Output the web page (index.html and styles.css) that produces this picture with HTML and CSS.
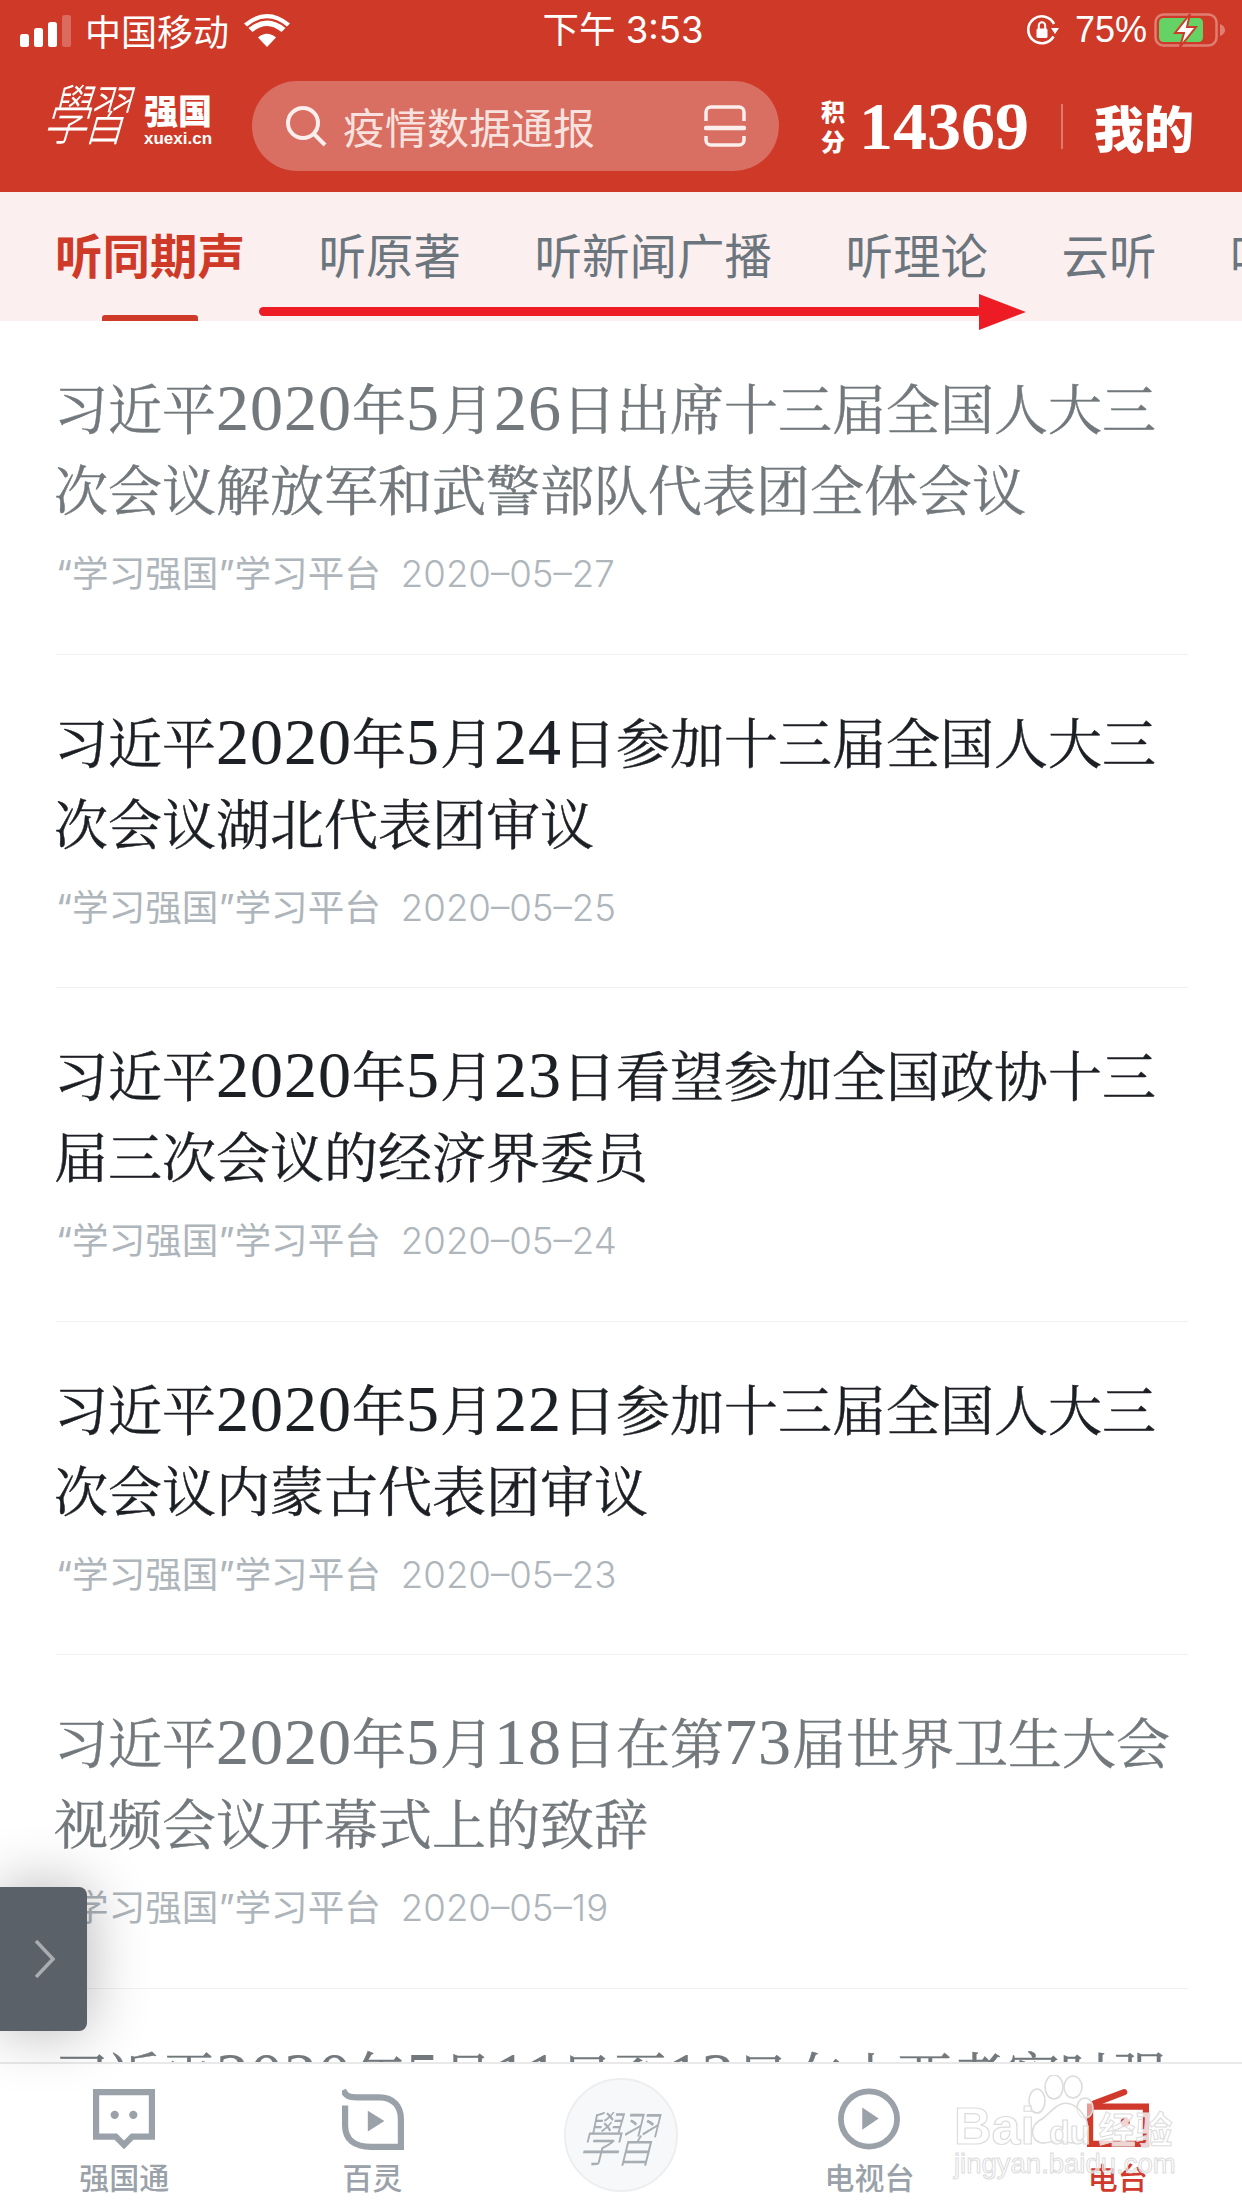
FILE: index.html
```html
<!DOCTYPE html>
<html lang="zh-CN">
<head>
<meta charset="utf-8">
<title>学习强国</title>
<link rel="stylesheet" href="styles.css">
</head>
<body>
<div class="phone">
  <header class="masthead">
    <div class="status">
      <div class="status-left">
        <svg class="signal" viewBox="0 0 51 32"><rect x="0" y="19" width="9" height="13" rx="2.5" fill="#fff"/><rect x="14" y="13" width="9" height="19" rx="2.5" fill="#fff"/><rect x="28" y="7" width="9" height="25" rx="2.5" fill="#fff"/><rect x="42" y="0" width="9" height="32" rx="2.5" fill="#fff" opacity=".25"/></svg>
        <span class="carrier">中国移动</span>
        <svg class="wifi" viewBox="0 0 46 33"><path d="M23 33 L14 23.5 Q23 16 32 23.5 Z" fill="#fff"/><path d="M8.5 18 L4.5 14 Q23 -1 41.500 14 L37.500 18 Q23 6 8.500 18 Z" fill="#fff"/><path d="M0 9.500 Q23 -9.500 46 9.500 L43 12.500 Q23 -4 3 12.500 Z" fill="#fff"/></svg>
      </div>
      <div class="status-time">下午 3:53</div>
      <div class="status-right">
        <svg class="rotlock" viewBox="0 0 33 33"><path d="M27.500 22.500 A13.500 13.500 0 1 1 28 10" fill="none" stroke="#fff" stroke-width="2.600"/><path d="M33 14 L25 14 L29 20 Z" fill="#fff"/><rect x="10.500" y="14.500" width="11" height="9.500" rx="1.500" fill="#fff"/><path d="M12.800 15 V11.500 a3.200 3.200 0 0 1 6.400 0 V15" fill="none" stroke="#fff" stroke-width="2"/></svg>
        <span class="pct">75%</span>
        <svg class="battery" viewBox="0 0 72 34"><rect x="1.500" y="1.500" width="61" height="31" rx="8" fill="none" stroke="#fff" stroke-opacity=".35" stroke-width="2.500"/><rect x="5" y="5" width="44" height="24" rx="4.500" fill="#64d264"/><path d="M66 11 Q71 13 71 17 Q71 21 66 23 Z" fill="#fff" fill-opacity=".35"/><path d="M36 1 L21 20 L30 20 L26 34 L42 14 L33 14 Z" fill="#fff" stroke="#cf3a28" stroke-width="2"/></svg>
      </div>
    </div>
    <div class="topbar">
      <div class="logo">
        <span class="logo-brush">學習</span>
        <span class="logo-side"><b class="logo-cn">强国</b><b class="logo-en">xuexi.cn</b></span>
      </div>
      <div class="search">
        <svg class="search-icon" viewBox="0 0 42 42"><circle cx="18" cy="18" r="15" fill="none" stroke="#fbeeec" stroke-width="4"/><path d="M29 29 L40 40" stroke="#fbeeec" stroke-width="4"/></svg>
        <span class="search-text">疫情数据通报</span>
        <svg class="scan-icon" viewBox="0 0 42 42"><path d="M2 16 V7 a5 5 0 0 1 5 -5 H35 a5 5 0 0 1 5 5 V16 M2 31 V35 a5 5 0 0 0 5 5 H35 a5 5 0 0 0 5 -5 V31" fill="none" stroke="#fbeeec" stroke-width="3.500"/><path d="M2 23 H40" stroke="#fbeeec" stroke-width="4.500" stroke-linecap="round"/></svg>
      </div>
      <div class="score">
        <span class="score-label">积<br>分</span>
        <span class="score-num">14369</span>
        <span class="score-div"></span>
        <span class="mine">我的</span>
      </div>
    </div>
  </header>

  <nav class="tabs">
    <span class="tab active">听同期声</span>
    <span class="tab">听原著</span>
    <span class="tab">听新闻广播</span>
    <span class="tab">听理论</span>
    <span class="tab">云听</span>
    <span class="tab">听书</span>
    <svg class="swipe-arrow" viewBox="0 0 767 36"><rect x="0" y="13" width="722" height="9" rx="4.500" fill="#ed1c24"/><path d="M720 0 L767 18 L720 36 Z" fill="#ed1c24"/></svg>
  </nav>

  <main class="list">
    <article class="item read">
      <h2 class="title">习近平<span class="num">2020</span>年<span class="num">5</span>月<span class="num">26</span>日出席十三届全国人大三次会议解放军和武警部队代表团全体会议</h2>
      <p class="meta">“学习强国”学习平台<span class="date">2020–05–27</span></p>
    </article>
    <article class="item">
      <h2 class="title">习近平<span class="num">2020</span>年<span class="num">5</span>月<span class="num">24</span>日参加十三届全国人大三次会议湖北代表团审议</h2>
      <p class="meta">“学习强国”学习平台<span class="date">2020–05–25</span></p>
    </article>
    <article class="item">
      <h2 class="title">习近平<span class="num">2020</span>年<span class="num">5</span>月<span class="num">23</span>日看望参加全国政协十三届三次会议的经济界委员</h2>
      <p class="meta">“学习强国”学习平台<span class="date">2020–05–24</span></p>
    </article>
    <article class="item">
      <h2 class="title">习近平<span class="num">2020</span>年<span class="num">5</span>月<span class="num">22</span>日参加十三届全国人大三次会议内蒙古代表团审议</h2>
      <p class="meta">“学习强国”学习平台<span class="date">2020–05–23</span></p>
    </article>
    <article class="item read">
      <h2 class="title">习近平<span class="num">2020</span>年<span class="num">5</span>月<span class="num">18</span>日在第<span class="num">73</span>届世界卫生大会视频会议开幕式上的致辞</h2>
      <p class="meta">“学习强国”学习平台<span class="date">2020–05–19</span></p>
    </article>
    <article class="item read">
      <h2 class="title">习近平<span class="num">2020</span>年<span class="num">5</span>月<span class="num">11</span>日至<span class="num">12</span>日在山西考察时强调</h2>
    </article>
  </main>

  <div class="side-handle">
    <svg class="chevron" viewBox="0 0 20 38"><path d="M1 1 L18 19 L1 37" fill="none" stroke="#a9adb1" stroke-width="3.500"/></svg>
  </div>

  <footer class="tabbar">
    <div class="bar-item">
      <svg class="bar-icon" viewBox="0 0 60 60"><path d="M3 4 H57 V47 H38 L30 55 L22 47 H3 Z" fill="none" stroke="#9aa1a9" stroke-width="6"/><circle cx="21" cy="26" r="4" fill="#9aa1a9"/><circle cx="39" cy="26" r="4" fill="#9aa1a9"/></svg>
      <span class="bar-label">强国通</span>
    </div>
    <div class="bar-item">
      <svg class="bar-icon" viewBox="0 0 60 60"><path d="M1 2 C4 8 7 9 14 9 H36 C50 9 57 18 57 30 V57 H28 C12 57 3 50 3 36 V17" fill="none" stroke="#9aa1a9" stroke-width="6"/><path d="M25 22 L41 32 L25 42 Z" fill="#9aa1a9"/></svg>
      <span class="bar-label">百灵</span>
    </div>
    <div class="bar-item center">
      <div class="center-badge"><span class="badge-brush">學習</span></div>
    </div>
    <div class="bar-item">
      <svg class="bar-icon" viewBox="0 0 64 64"><ellipse cx="32" cy="32" rx="29" ry="28.500" fill="none" stroke="#9aa1a9" stroke-width="6"/><path d="M25 20 L42 31.500 L25 43 Z" fill="#9aa1a9"/></svg>
      <span class="bar-label">电视台</span>
    </div>
    <div class="bar-item on">
      <svg class="bar-icon" viewBox="0 0 60 60"><path d="M7 15 L36 4" stroke="#d0392b" stroke-width="6" stroke-linecap="round"/><path d="M3 18 H57 V54 H3 Z" fill="none" stroke="#d0392b" stroke-width="6"/><circle cx="37" cy="33" r="4.500" fill="#d0392b"/></svg>
      <span class="bar-label">电台</span>
    </div>
    <div class="watermark">
      <svg class="paw" viewBox="0 0 70 74"><g fill="rgba(255,255,255,.5)" stroke="#dcdcdc" stroke-width="1.600"><ellipse cx="9" cy="26" rx="8" ry="12"/><ellipse cx="26" cy="12" rx="9" ry="12"/><ellipse cx="45" cy="12" rx="9" ry="11"/><ellipse cx="57" cy="33" rx="8" ry="10"/><path d="M28 32 C38 24 48 30 54 38 C64 48 60 68 44 68 C36 66 24 66 16 68 C2 68 0 50 14 44 C20 40 22 36 28 32 Z"/></g></svg>
      <div class="wm-main"><span>Bai</span><span class="wm-du">du</span><span class="wm-cn">经验</span></div>
      <div class="wm-sub">jingyan.baidu.com</div>
    </div>
  </footer>
</div>
</body>
</html>
```
FILE: styles.css
```css
* { box-sizing: border-box; }
html, body { margin: 0; padding: 0; background: #fff; }
body { font-family: "Noto Sans CJK SC", "Liberation Sans", sans-serif; }
.phone { position: relative; width: 1242px; height: 2208px; overflow: hidden; display: flex; flex-direction: column; background: #fff; }

.masthead { height: 192px; flex: none; background: #cf3a28; color: #fff; }
.status { height: 62px; padding: 13px 16px 0 20px; display: grid; grid-template-columns: 1fr auto 1fr; align-items: start; }
.status-left { display: flex; align-items: center; height: 34px; }
.signal { width: 51px; height: 32px; margin-top: 1px; }
.carrier { font-size: 36px; line-height: 34px; margin-left: 14px; }
.wifi { width: 46px; height: 33px; margin-left: 15px; }
.status-time { font-size: 36.500px; line-height: 34px; font-family: Inter, "Noto Sans CJK SC", sans-serif; }
.status-right { display: flex; align-items: center; justify-content: flex-end; height: 34px; }
.rotlock { width: 33px; height: 33px; }
.pct { font-family: "Liberation Sans", sans-serif; font-size: 36px; line-height: 34px; margin-left: 16px; }
.battery { width: 72px; height: 34px; margin-left: 7px; }

.topbar { height: 130px; padding: 7px 0 0 48px; display: flex; align-items: flex-start; }
.logo { width: 162px; height: 80px; display: flex; align-items: flex-end; }
.logo-brush { font-family: "Noto Sans CJK TC", sans-serif; font-size: 44px; line-height: 70px; letter-spacing: -5px; width: 94px; flex: none; transform: skewX(-16deg) scaleY(1.5); transform-origin: 50% 60%; font-weight: 300; }
.logo-side { display: flex; flex-direction: column; align-items: flex-start; margin-left: 2px; }
.logo-cn { font-size: 34px; line-height: 38px; font-weight: 900; white-space: nowrap; letter-spacing: 0; }
.logo-en { font-family: "Liberation Sans", sans-serif; font-size: 17px; line-height: 20px; font-weight: 700; }
.search { width: 527px; height: 90px; margin: 12px 0 0 42px; border-radius: 45px; background: #d96e62; display: flex; align-items: center; padding: 0 33px; flex: none; }
.search-icon { width: 42px; height: 42px; flex: none; }
.search-text { font-size: 42px; line-height: 48px; color: #f8e2df; margin-left: 16px; flex: 1; white-space: nowrap; }
.scan-icon { width: 42px; height: 42px; flex: none; }
.score { display: flex; align-items: center; height: 90px; margin: 12px 0 0 42px; flex: none; }
.score-label { font-family: "Noto Sans CJK SC", serif; font-weight: 900; font-size: 24px; line-height: 30px; width: 27px; }
.score-num { font-family: "Liberation Serif", serif; font-weight: 700; font-size: 68px; line-height: 70px; margin-left: 11px; }
.score-div { width: 2px; height: 45px; background: #e07a6d; margin-left: 32px; }
.mine { font-family: "Noto Sans CJK SC", serif; font-weight: 900; font-size: 50px; line-height: 60px; margin-left: 31px; }

.tabs { position: relative; height: 129px; flex: none; background: #fbf0ef; display: flex; gap: 73.500px; padding: 31px 0 0 55px; white-space: nowrap; overflow: visible; z-index: 2; }
.tab { position: relative; font-size: 47.500px; line-height: 62px; color: #6b757d; flex: none; }
.tab.active { color: #cf3a28; font-weight: 700; }
.tab.active::after { content: ""; position: absolute; left: 47px; width: 96px; height: 6px; top: 92px; background: #cf3a28; border-radius: 3px 3px 0 0; }
.swipe-arrow { position: absolute; left: 259px; top: 102px; width: 767px; height: 36px; }

.list { flex: 1; min-height: 0; overflow: hidden; padding: 0 50px 0 54px; }
.item { height: 333.500px; padding-top: 45px; border-bottom: 1px solid #f0f1f2; margin-left: 2px; margin-right: 4px; }
.item:last-child { border-bottom: 0; }
.title { margin: 0 -4px 0 -2px; font-family: "Noto Serif CJK SC", "Noto Sans CJK SC", serif; font-weight: 400; font-size: 54px; line-height: 81px; color: #1c1f24; -webkit-text-stroke: .4px currentColor; }
.item.read .title { color: #72787c; }
.num { font-family: "Liberation Serif", serif; font-size: 66px; line-height: 0; letter-spacing: 1px; -webkit-text-stroke: .1px currentColor; }
.meta { margin: 21px 0 0; font-family: Inter, "Noto Sans CJK SC", sans-serif; font-size: 36.600px; line-height: 50px; color: #aeb5bb; white-space: nowrap; }
.date { font-weight: 300; margin-left: 20px; }

.side-handle { position: absolute; left: 0; top: 1887px; width: 87px; height: 144px; background: #5a6169; border-radius: 0 8px 8px 0; box-shadow: 0 0 60px rgba(0,0,0,.3); display: flex; align-items: center; padding-left: 35px; z-index: 3; }
.chevron { width: 20px; height: 38px; }

.tabbar { position: relative; height: 146px; flex: none; background: #fff; border-top: 2px solid #e9e9ea; display: grid; grid-template-columns: repeat(5, 1fr); z-index: 2; }
.bar-item { display: flex; flex-direction: column; align-items: center; padding-top: 24px; }
.bar-icon { width: 62px; height: 62px; flex: none; }
.bar-label { font-size: 30px; line-height: 36px; margin-top: 8px; color: #9aa1a9; font-weight: 500; }
.bar-item.on .bar-label { color: #d0392b; }
.center { padding-top: 14px; }
.center-badge { width: 114px; height: 114px; border-radius: 50%; background: #f7f8fa; border: 2px solid #eceef0; color: #a6adb3; font-family: "Noto Sans CJK TC", sans-serif; font-size: 40px; letter-spacing: -4px; line-height: 110px; text-align: center; }
.badge-brush { display: inline-block; transform: skewX(-14deg) scaleY(1.5); font-weight: 300; }

.watermark { position: absolute; left: 954px; top: 11px; width: 225px; height: 105px; pointer-events: none; }
.paw { position: absolute; left: 74px; top: 0; width: 70px; height: 74px; }
.wm-main { position: absolute; left: 0; top: 21px; display: flex; align-items: baseline; white-space: nowrap; font-family: "Liberation Sans", sans-serif; font-weight: 700; font-size: 52px; line-height: 60px; color: rgba(255,255,255,.7); -webkit-text-stroke: 1.200px #dcdcdc; }
.wm-du { font-size: 34px; margin: 0 6px 0 14px; }
.wm-cn { font-family: "Noto Sans CJK SC", sans-serif; font-size: 37px; -webkit-text-stroke: 1px #dcdcdc; color: rgba(255,255,255,.8); margin-left: 2px; }
.wm-sub { position: absolute; left: 0; top: 72px; font-family: "Liberation Sans", sans-serif; font-size: 27.500px; line-height: 34px; white-space: nowrap; color: rgba(255,255,255,.6); -webkit-text-stroke: 1px #dcdcdc; }
```
